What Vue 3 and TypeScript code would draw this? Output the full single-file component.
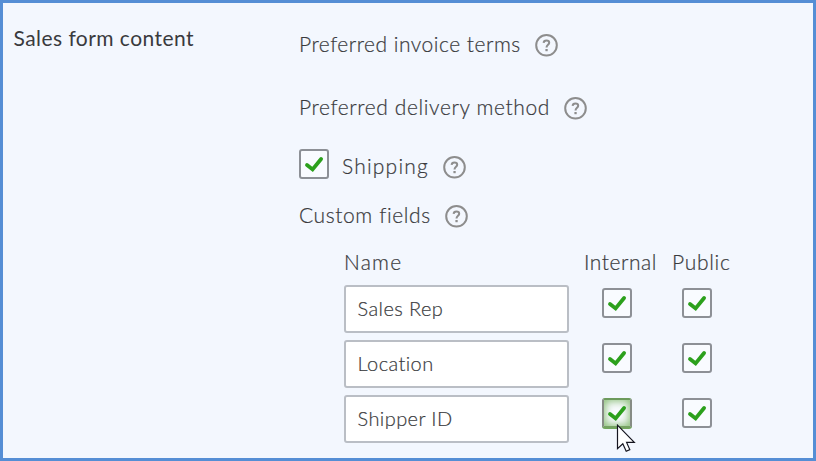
<script setup lang="ts">
interface Preference {
  id: string
  label: string
  checkbox?: boolean
}

interface CustomField {
  id: string
  name: string
}

const preferences: Preference[] = [
  { id: 'invoice', label: 'Preferred invoice terms' },
  { id: 'delivery', label: 'Preferred delivery method' },
  { id: 'shipping', label: 'Shipping', checkbox: true },
  { id: 'custom', label: 'Custom fields' },
]

const fields: CustomField[] = [
  { id: 'sales', name: 'Sales Rep' },
  { id: 'location', name: 'Location' },
  { id: 'shipper', name: 'Shipper ID' },
]

const checkPath = 'M8 15.9L13.6 20.4L22.1 10'
</script>

<template>
  <section class="panel">
    <h2 class="title">Sales form content</h2>
    <div class="content">
      <div v-for="p in preferences" :key="p.id" class="pref" :class="p.id">
        <span v-if="p.checkbox" class="box">
          <svg viewBox="0 0 30 30"><path :d="checkPath" /></svg>
        </span>
        <span class="label">{{ p.label }}</span>
        <svg class="help" viewBox="0 0 24 24">
          <circle cx="12.5" cy="12.3" r="10.3" />
          <path d="M9.6 9.9C9.7 8.2 10.8 7.4 12.4 7.4C14.1 7.4 15.2 8.3 15.2 9.7C15.2 11.7 12.5 11.8 12.5 14.4" />
          <rect x="11.4" y="16" width="2.3" height="2.2" />
        </svg>
      </div>

      <div class="table">
        <div class="head">
          <span class="col-name">Name</span>
          <span class="col-internal">Internal</span>
          <span class="col-public">Public</span>
        </div>
        <div v-for="f in fields" :key="f.id" class="row">
          <div class="input" :class="f.id">{{ f.name }}</div>
          <span class="box internal" :class="{ active: f.id === 'shipper' }">
            <svg viewBox="0 0 30 30"><path :d="checkPath" /></svg>
            <svg v-if="f.id === 'shipper'" class="cursor" viewBox="0 0 20 29">
              <path d="M1.5 1.2V24.6L6.8 19.7L10.2 27.2L13.8 25.6L10.6 18.4H18.3Z" />
            </svg>
          </span>
          <span class="box public">
            <svg viewBox="0 0 30 30"><path :d="checkPath" /></svg>
          </span>
        </div>
      </div>
    </div>
  </section>
</template>

<style>
body {
  margin: 0;
}
</style>

<style scoped>
.panel {
  box-sizing: border-box;
  width: 816px;
  height: 461px;
  border: 3px solid #558ed5;
  background: #f3f7fe;
  display: flex;
  font-family: Lato, "Open Sans", sans-serif;
  font-size: 21px;
  font-weight: 300;
  line-height: 26px;
  color: #393a3d;
  white-space: nowrap;
  -webkit-text-stroke: 0.2px #393a3d;
}
.title {
  margin: 0;
  padding: 22px 0 0 10.5px;
  width: 286px;
  box-sizing: border-box;
  flex: none;
  font-size: 21px;
  font-weight: 400;
  letter-spacing: 0.45px;
  -webkit-text-stroke: 0;
}
.content {
  padding-top: 27px;
  margin-left: 10px;
}
.pref {
  display: flex;
  align-items: center;
  height: 30px;
}
.label {
  padding-bottom: 2px;
  flex: none;
}
.help {
  width: 24px;
  height: 24px;
  flex: none;
  fill: none;
  stroke: #8d8d8d;
  stroke-width: 2;
}
.help rect {
  fill: #8d8d8d;
  stroke: none;
}
.invoice .label {
  width: 235px;
  letter-spacing: 0.5px;
}
.delivery {
  margin-top: 33px;
}
.delivery .label {
  width: 264px;
  letter-spacing: 0.6px;
}
.shipping {
  margin-top: 29px;
}
.shipping .box {
  margin: -6px 13px 0 0;
}
.shipping .label {
  width: 100px;
  letter-spacing: 1.2px;
}
.custom {
  margin-top: 19px;
}
.custom .label {
  width: 145px;
  letter-spacing: 0.6px;
}
.box {
  position: relative;
  box-sizing: border-box;
  display: block;
  width: 30px;
  height: 30px;
  flex: none;
  border: 2px solid #8d9096;
  border-radius: 3px;
  background: #f9fbff;
}
.box > svg {
  display: block;
  width: 30px;
  height: 30px;
  margin: -2px;
  fill: none;
  stroke: #2ca01c;
  stroke-width: 3.8;
  stroke-linecap: round;
}
.table {
  margin: 17px 0 0 45px;
}
.head {
  display: flex;
  height: 30px;
  line-height: 28px;
}
.col-name {
  width: 240px;
  letter-spacing: 1.2px;
}
.col-internal {
  width: 88px;
  letter-spacing: 0.55px;
}
.col-public {
  letter-spacing: 0.7px;
}
.row {
  display: flex;
  height: 48px;
  margin-top: 7px;
}
.input {
  box-sizing: border-box;
  width: 225px;
  height: 48px;
  border: 2px solid #babec5;
  border-radius: 3px;
  background: #fff;
  padding-left: 11.5px;
  font-size: 20px;
  line-height: 42px;
  letter-spacing: 0.42px;
}
.internal {
  margin: 3px 50px 0 33px;
}
.public {
  margin-top: 3px;
}
.active {
  border-color: #868b85;
  border-top-color: #6c9a5c;
  border-bottom-color: #75a262;
  box-shadow: inset 0 0 8px 1px #83ba6e, 0 1px 0 #72a85c;
}
.box > .cursor {
  position: absolute;
  left: 12px;
  top: 24px;
  width: 20px;
  height: 29px;
  margin: 0;
  fill: #fff;
  stroke: #15151f;
  stroke-width: 1.2;
}
</style>
